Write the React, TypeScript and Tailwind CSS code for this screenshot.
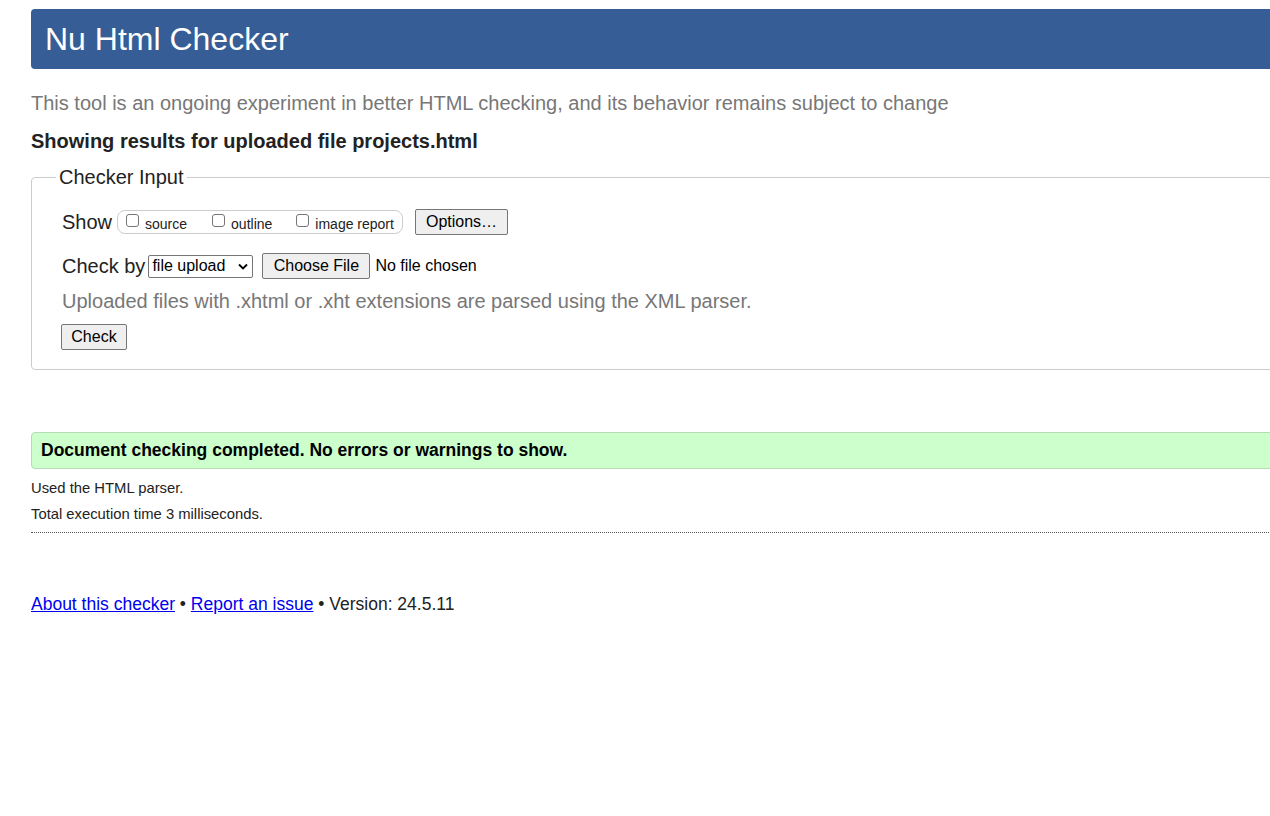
import React from 'react';

const Checkbox: React.FC<{ label: string; gap?: string }> = ({ label, gap }) => (
  <label className={`flex items-center ${gap ?? ''}`}>
    <span className="mt-[-4px] inline-block h-[13px] w-[13px] rounded-[3px] border border-[#767676] bg-white"></span>
    <span className="ml-[6px] mt-[4px] text-[14px] text-[#222]">{label}</span>
  </label>
);

const App: React.FC = () => {
  return (
    <div className="h-[816px] w-full overflow-hidden bg-white font-['Liberation_Sans',Arial,sans-serif] text-[#222]">
      <div className="ml-[31px] w-[1300px] pt-[9px]">
        {/* Header */}
        <header className="flex h-[60px] items-center rounded-[4px] bg-[#365d95] pl-[14px]">
          <h1 className="text-[32px] leading-none text-white">Nu Html Checker</h1>
        </header>

        <p className="mt-[22px] text-[20px] leading-[24px] text-[#777]">
          This tool is an ongoing experiment in better HTML checking, and its behavior remains subject to change
        </p>

        <p className="mt-[14px] text-[20px] font-bold leading-[24px] text-[#222]">
          Showing results for uploaded file projects.html
        </p>

        {/* Checker Input */}
        <fieldset className="mt-[12px] rounded-[4px] border border-[#ccc] pb-[19px] pl-[30px]">
          <legend className="ml-[-6px] px-[3px] text-[20px] leading-[24px] text-[#222]">Checker Input</legend>

          <div className="mt-[20px] flex items-center">
            <span className="text-[20px] leading-[24px]">Show</span>
            <div className="ml-[5px] flex h-[24px] w-[286px] items-center rounded-[8px] border border-[#ccc] pl-[8px]">
              <Checkbox label="source" />
              <Checkbox label="outline" gap="ml-[25px]" />
              <Checkbox label="image report" gap="ml-[24px]" />
            </div>
            <button className="ml-[12px] h-[26px] w-[93px] rounded-[2px] border border-[#767676] bg-[#efefef] text-[16px] leading-none text-black">
              Options…
            </button>
          </div>

          <div className="mt-[18px] flex items-center">
            <span className="text-[20px] leading-[24px]">Check by</span>
            <div className="ml-[3px] flex h-[23px] w-[105px] items-center justify-between rounded-[2px] border border-[#767676] bg-white pl-[3px] pr-[4px] text-[16px] leading-none text-black">
              <span>file upload</span>
              <svg width="10" height="7" viewBox="0 0 10 7" fill="none">
                <path d="M1 1.5 L5 5.5 L9 1.5" stroke="#000" strokeWidth="1.8" />
              </svg>
            </div>
            <button className="ml-[9px] h-[26px] w-[108px] rounded-[2px] border border-[#767676] bg-[#efefef] text-[16px] leading-none text-black">
              Choose File
            </button>
            <span className="ml-[5px] text-[16px] text-black">No file chosen</span>
          </div>

          <p className="mt-[10px] text-[20px] leading-[24px] text-[#777]">
            Uploaded files with .xhtml or .xht extensions are parsed using the XML parser.
          </p>

          <button className="ml-[-1px] mt-[11px] h-[26px] w-[66px] rounded-[2px] border border-[#767676] bg-[#efefef] text-[16px] leading-none text-black">
            Check
          </button>
        </fieldset>

        {/* Result */}
        <div className="mt-[62px] flex h-[37px] items-center rounded-[4px] border border-[#b5dcb5] bg-[#ccffcc] pl-[9px]">
          <p className="text-[17.5px] font-bold text-black">Document checking completed. No errors or warnings to show.</p>
        </div>

        <p className="mt-[11px] text-[14.8px] leading-[16px] text-[#222]">Used the HTML parser.</p>
        <p className="mt-[10px] text-[14.8px] leading-[16px] text-[#222]">Total execution time 3 milliseconds.</p>
        <div className="mt-[10px] border-t border-dotted border-[#555]"></div>

        <p className="mt-[61px] text-[17.5px] leading-[20px] text-[#222]">
          <a href="#" className="text-[#0000ee] underline">About this checker</a>
          {' • '}
          <a href="#" className="text-[#0000ee] underline">Report an issue</a>
          {' • Version: 24.5.11'}
        </p>
      </div>
    </div>
  );
};

export default App;
